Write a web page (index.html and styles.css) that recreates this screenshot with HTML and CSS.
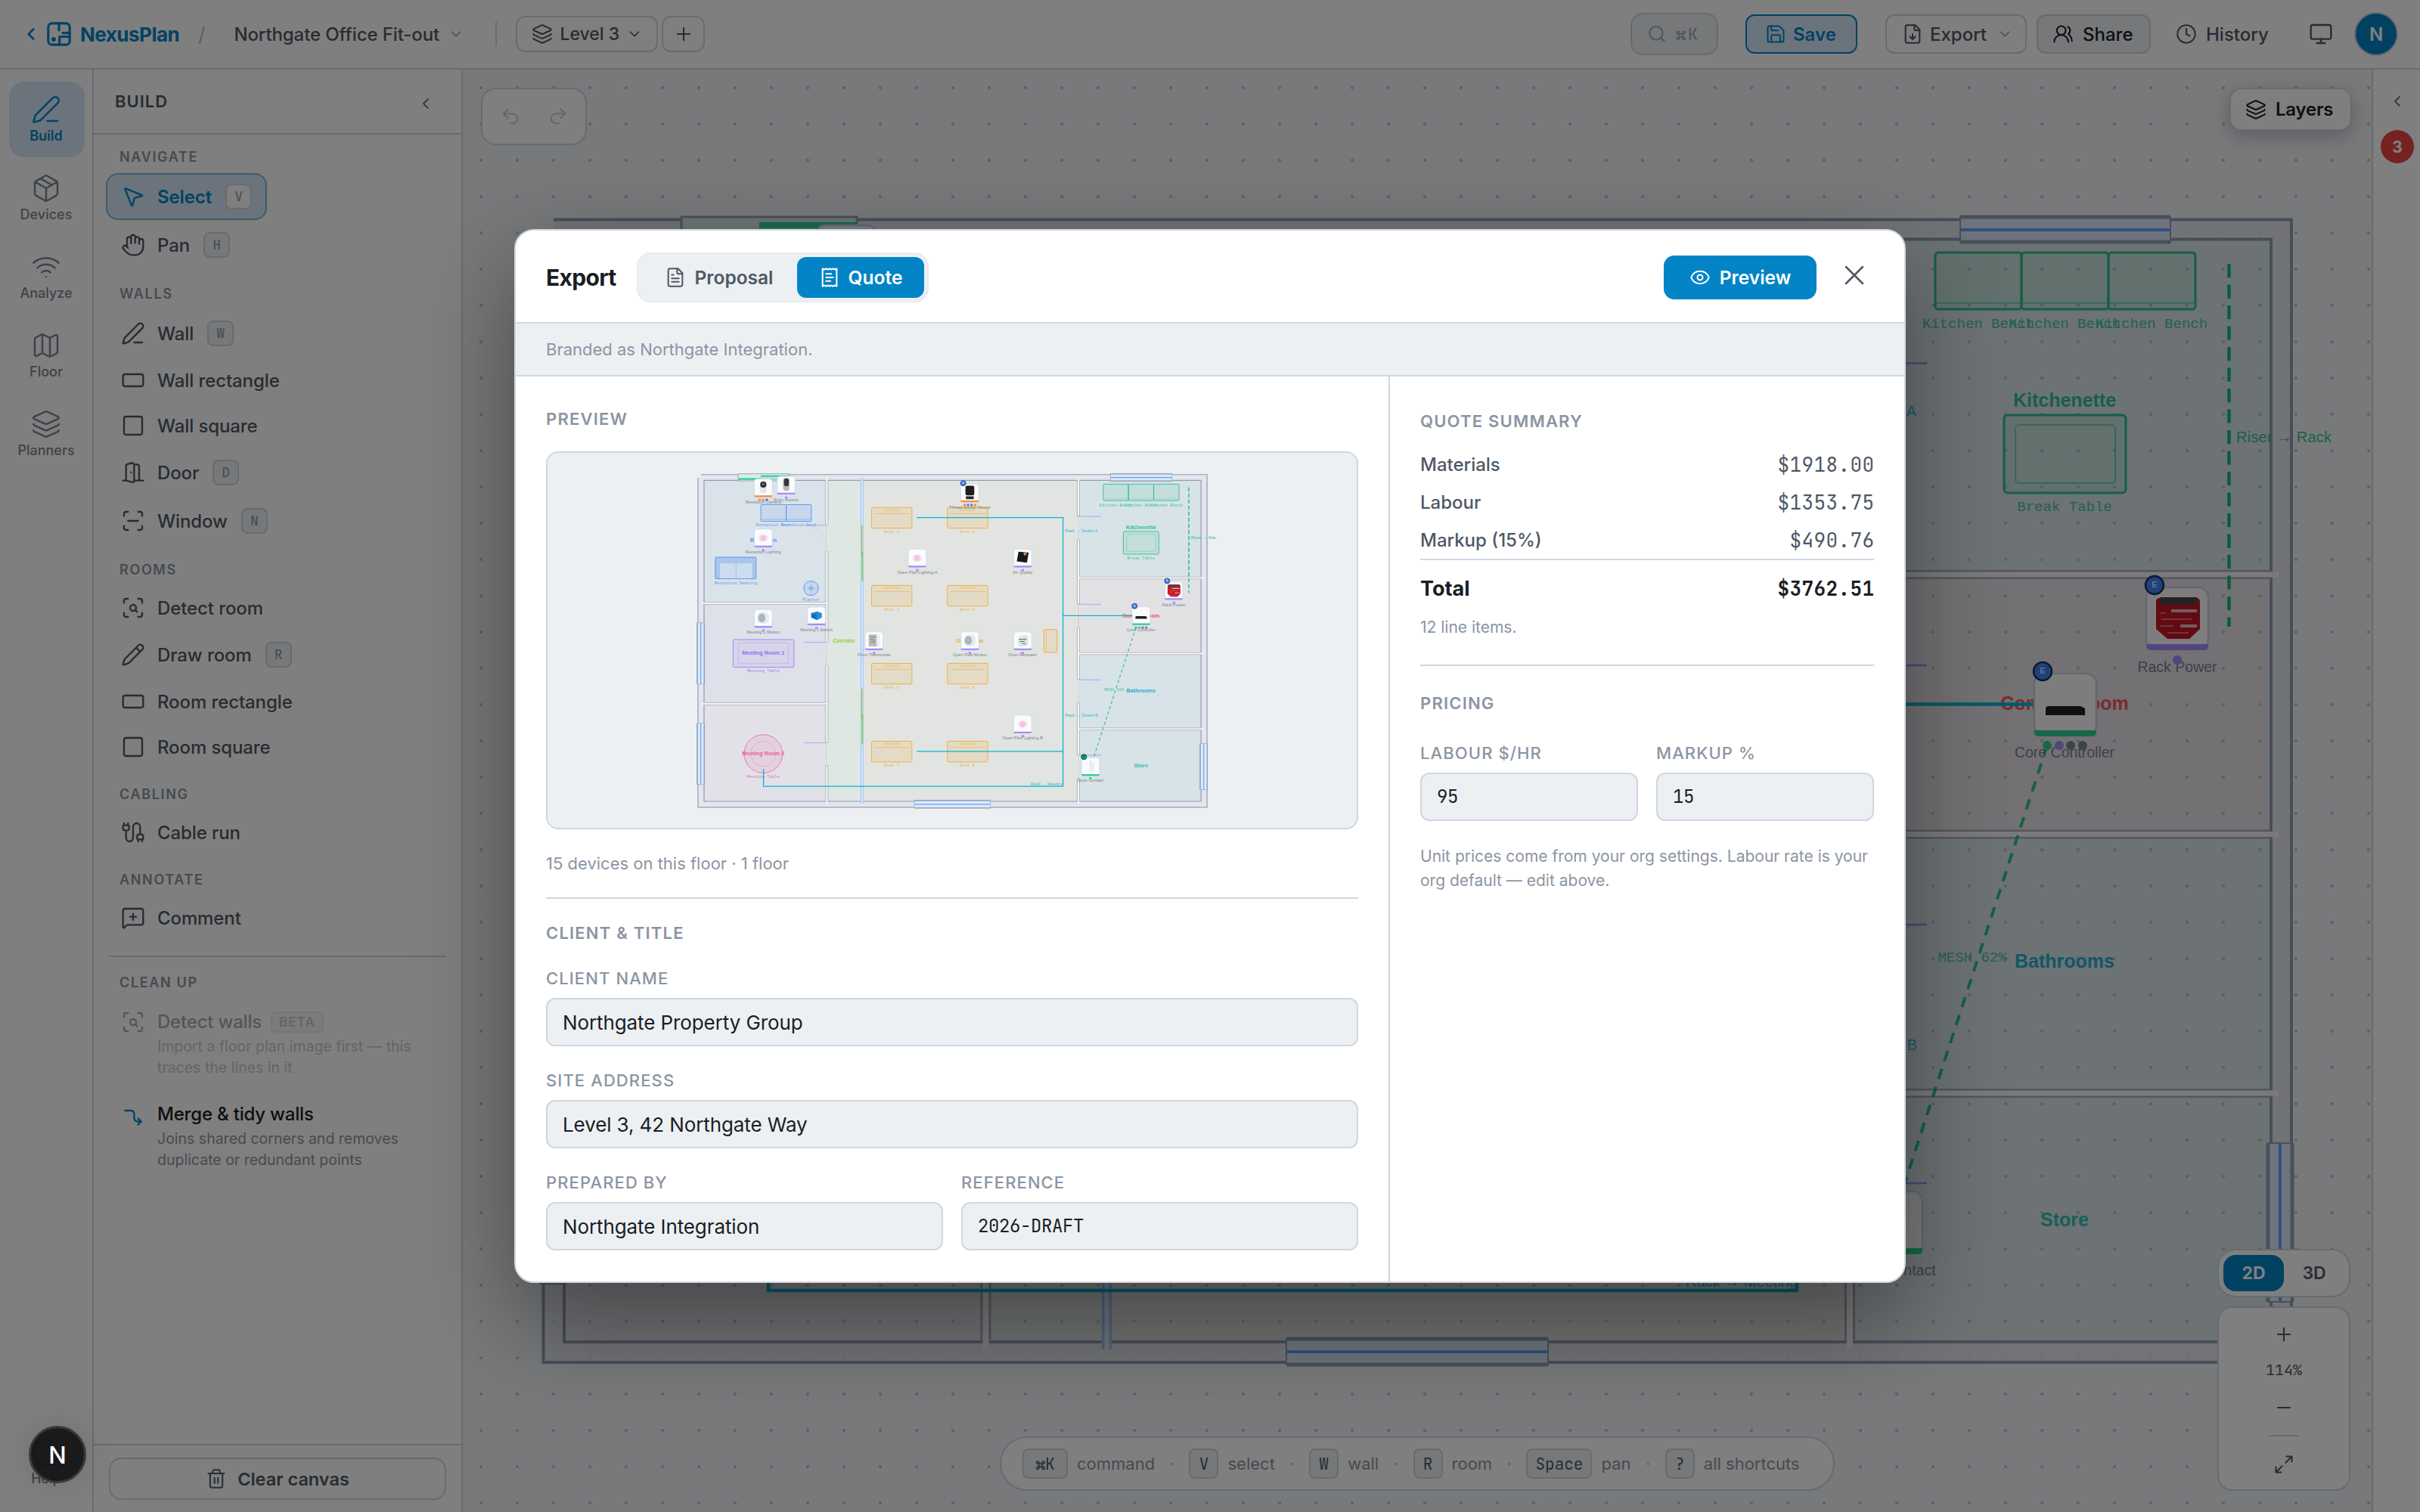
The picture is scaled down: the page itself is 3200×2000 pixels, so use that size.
FILE: index.html
```html
<!DOCTYPE html>
<html lang="en">
<head>
<meta charset="utf-8">
<title>NexusPlan – Northgate Office Fit-out</title>
<link rel="stylesheet" href="styles.css">
</head>
<body>
<svg class="defs" aria-hidden="true">
  <symbol id="i-chev-left" viewBox="0 0 24 24"><path d="m15 18-6-6 6-6"/></symbol>
  <symbol id="i-chev-down" viewBox="0 0 24 24"><path d="m6 9 6 6 6-6"/></symbol>
  <symbol id="i-logo" viewBox="0 0 24 24"><rect x="2" y="2" width="20" height="20" rx="3.5"/><path d="M12 2v6.500M22 11h-6.500M12.500 22v-7.500h9.500"/><circle cx="7" cy="17" r="1"/></symbol>
  <symbol id="i-layers" viewBox="0 0 24 24"><path d="M12.830 2.180a2 2 0 0 0-1.660 0L2.600 6.080a1 1 0 0 0 0 1.830l8.580 3.910a2 2 0 0 0 1.660 0l8.580-3.900a1 1 0 0 0 0-1.830z"/><path d="M2 12a1 1 0 0 0 .58.91l8.600 3.910a2 2 0 0 0 1.650 0l8.580-3.900A1 1 0 0 0 22 12"/><path d="M2 17a1 1 0 0 0 .58.91l8.600 3.910a2 2 0 0 0 1.650 0l8.580-3.900A1 1 0 0 0 22 17"/></symbol>
  <symbol id="i-plus" viewBox="0 0 24 24"><path d="M5 12h14M12 5v14"/></symbol>
  <symbol id="i-minus" viewBox="0 0 24 24"><path d="M5 12h14"/></symbol>
  <symbol id="i-search" viewBox="0 0 24 24"><circle cx="11" cy="11" r="8"/><path d="m21 21-4.340-4.340"/></symbol>
  <symbol id="i-save" viewBox="0 0 24 24"><path d="M15.200 3a2 2 0 0 1 1.400.6l3.800 3.800a2 2 0 0 1 .6 1.400V19a2 2 0 0 1-2 2H5a2 2 0 0 1-2-2V5a2 2 0 0 1 2-2z"/><path d="M17 21v-7a1 1 0 0 0-1-1H8a1 1 0 0 0-1 1v7M7 3v4a1 1 0 0 0 1 1h7"/></symbol>
  <symbol id="i-file-down" viewBox="0 0 24 24"><path d="M15 2H6a2 2 0 0 0-2 2v16a2 2 0 0 0 2 2h12a2 2 0 0 0 2-2V7Z"/><path d="M14 2v4a2 2 0 0 0 2 2h4M12 18v-6M9 15l3 3 3-3"/></symbol>
  <symbol id="i-users" viewBox="0 0 24 24"><path d="M18 21a8 8 0 0 0-16 0"/><circle cx="10" cy="8" r="5"/><path d="M22 20c0-3.370-2-6.500-4-8a5 5 0 0 0-.45-8.300"/></symbol>
  <symbol id="i-clock" viewBox="0 0 24 24"><circle cx="12" cy="12" r="10"/><path d="M12 6v6l4 2"/></symbol>
  <symbol id="i-monitor" viewBox="0 0 24 24"><rect x="2" y="3" width="20" height="14" rx="2"/><path d="M8 21h8M12 17v4"/></symbol>
  <symbol id="i-pen" viewBox="0 0 24 24"><path d="M13 21h8M21.174 6.812a1 1 0 0 0-3.986-3.987L3.842 16.174a2 2 0 0 0-.5.83l-1.321 4.352a.5.5 0 0 0 .623.622l4.353-1.320a2 2 0 0 0 .83-.497z"/></symbol>
  <symbol id="i-pencil" viewBox="0 0 24 24"><path d="M21.174 6.812a1 1 0 0 0-3.986-3.987L3.842 16.174a2 2 0 0 0-.5.83l-1.321 4.352a.5.5 0 0 0 .623.622l4.353-1.320a2 2 0 0 0 .83-.497zM15 5l4 4"/></symbol>
  <symbol id="i-package" viewBox="0 0 24 24"><path d="M11 21.730a2 2 0 0 0 2 0l7-4A2 2 0 0 0 21 16V8a2 2 0 0 0-1-1.730l-7-4a2 2 0 0 0-2 0l-7 4A2 2 0 0 0 3 8v8a2 2 0 0 0 1 1.730zM12 22V12M3.300 7l8.700 5 8.700-5M7.500 4.270l9 5.150"/></symbol>
  <symbol id="i-wifi" viewBox="0 0 24 24"><path d="M12 20h.01M2 8.820a15 15 0 0 1 20 0M5 12.859a10 10 0 0 1 14 0M8.500 16.429a5 5 0 0 1 7 0"/></symbol>
  <symbol id="i-map" viewBox="0 0 24 24"><path d="M14.106 5.553a2 2 0 0 0 1.788 0l3.659-1.830A1 1 0 0 1 21 4.619v12.764a1 1 0 0 1-.553.894l-4.553 2.277a2 2 0 0 1-1.788 0l-4.212-2.106a2 2 0 0 0-1.788 0l-3.659 1.830A1 1 0 0 1 3 19.381V6.618a1 1 0 0 1 .553-.894l4.553-2.277a2 2 0 0 1 1.788 0zM15 5.764v15M9 3.236v15"/></symbol>
  <symbol id="i-pointer" viewBox="0 0 24 24"><path d="M4.037 4.688a.495.495 0 0 1 .651-.651l16 6.500a.5.5 0 0 1-.063.947l-6.124 1.580a2 2 0 0 0-1.438 1.435l-1.579 6.126a.5.5 0 0 1-.947.063z"/></symbol>
  <symbol id="i-hand" viewBox="0 0 24 24"><path d="M18 11V6a2 2 0 0 0-4 0M14 10V4a2 2 0 0 0-4 0v2M10 10.500V6a2 2 0 0 0-4 0v8"/><path d="M18 8a2 2 0 1 1 4 0v6a8 8 0 0 1-8 8h-2c-2.800 0-4.500-.86-5.990-2.340l-3.600-3.600a2 2 0 0 1 2.830-2.820L7 15"/></symbol>
  <symbol id="i-rect" viewBox="0 0 24 24"><rect x="2" y="6" width="20" height="12" rx="2"/></symbol>
  <symbol id="i-square" viewBox="0 0 24 24"><rect x="3" y="3" width="18" height="18" rx="2"/></symbol>
  <symbol id="i-door" viewBox="0 0 24 24"><path d="M13 4h3a2 2 0 0 1 2 2v14M2 20h3M13 20h9M10 12v.01M13 4.562v16.157a1 1 0 0 1-1.242.97L5 20V5.562a2 2 0 0 1 1.515-1.940l4-1A2 2 0 0 1 13 4.561Z"/></symbol>
  <symbol id="i-scan-line" viewBox="0 0 24 24"><path d="M3 7V5a2 2 0 0 1 2-2h2M17 3h2a2 2 0 0 1 2 2v2M21 17v2a2 2 0 0 1-2 2h-2M7 21H5a2 2 0 0 1-2-2v-2M7 12h10"/></symbol>
  <symbol id="i-scan-search" viewBox="0 0 24 24"><path d="M3 7V5a2 2 0 0 1 2-2h2M17 3h2a2 2 0 0 1 2 2v2M21 17v2a2 2 0 0 1-2 2h-2M7 21H5a2 2 0 0 1-2-2v-2M16 16l-1.900-1.900"/><circle cx="12" cy="12" r="3"/></symbol>
  <symbol id="i-cable" viewBox="0 0 24 24"><path d="M17 19a1 1 0 0 1-1-1v-2a2 2 0 0 1 2-2h2a2 2 0 0 1 2 2v2a1 1 0 0 1-1 1zM17 21v-2M19 14V6.500a1 1 0 0 0-7 0v11a1 1 0 0 1-7 0V10M21 21v-2M3 5V3M4 10a2 2 0 0 1-2-2V6a1 1 0 0 1 1-1h4a1 1 0 0 1 1 1v2a2 2 0 0 1-2 2zM7 5V3"/></symbol>
  <symbol id="i-comment" viewBox="0 0 24 24"><path d="M22 17a2 2 0 0 1-2 2H6.828a2 2 0 0 0-1.414.586l-2.202 2.202A.71.71 0 0 1 2 21.286V5a2 2 0 0 1 2-2h16a2 2 0 0 1 2 2zM12 8v6M9 11h6"/></symbol>
  <symbol id="i-merge" viewBox="0 0 24 24"><path d="M4 6h6a3 3 0 0 1 3 3v4a4 4 0 0 0 4 4h3M17 14l3 3-3 3"/></symbol>
  <symbol id="i-trash" viewBox="0 0 24 24"><path d="M10 11v6M14 11v6M19 6v14a2 2 0 0 1-2 2H7a2 2 0 0 1-2-2V6M3 6h18M8 6V4a2 2 0 0 1 2-2h4a2 2 0 0 1 2 2v2"/></symbol>
  <symbol id="i-help" viewBox="0 0 24 24"><circle cx="12" cy="12" r="10"/><path d="M9.090 9a3 3 0 0 1 5.830 1c0 2-3 3-3 3M12 17h.01"/></symbol>
  <symbol id="i-undo" viewBox="0 0 24 24"><path d="M9 14 4 9l5-5M4 9h10.500a5.500 5.500 0 0 1 0 11H11"/></symbol>
  <symbol id="i-redo" viewBox="0 0 24 24"><path d="m15 14 5-5-5-5M20 9H9.500a5.500 5.500 0 0 0 0 11H13"/></symbol>
  <symbol id="i-expand" viewBox="0 0 24 24"><path d="M15 3h6v6M21 3l-7 7M3 21l7-7M9 21H3v-6"/></symbol>
  <symbol id="i-file-text" viewBox="0 0 24 24"><path d="M15 2H6a2 2 0 0 0-2 2v16a2 2 0 0 0 2 2h12a2 2 0 0 0 2-2V7Z"/><path d="M14 2v4a2 2 0 0 0 2 2h4M10 9H8M16 13H8M16 17H8"/></symbol>
  <symbol id="i-receipt" viewBox="0 0 24 24"><path d="M4 2v20l2-1 2 1 2-1 2 1 2-1 2 1 2-1 2 1V2l-2 1-2-1-2 1-2-1-2 1-2-1-2 1ZM14 8H8M16 12H8M13 16H8"/></symbol>
  <symbol id="i-eye" viewBox="0 0 24 24"><path d="M2.062 12.348a1 1 0 0 1 0-.696 10.750 10.750 0 0 1 19.876 0 1 1 0 0 1 0 .696 10.750 10.750 0 0 1-19.876 0"/><circle cx="12" cy="12" r="3"/></symbol>
  <symbol id="i-x" viewBox="0 0 24 24"><path d="M18 6 6 18M6 6l12 12"/></symbol>
</svg>

<div class="app">
  <header class="topbar">
    <svg class="icon back"><use href="#i-chev-left"/></svg>
    <svg class="icon logo"><use href="#i-logo"/></svg>
    <span class="brand">NexusPlan</span>
    <span class="slash">/</span>
    <span class="project">Northgate Office Fit-out</span>
    <svg class="icon chev faint"><use href="#i-chev-down"/></svg>
    <span class="vsep"></span>
    <button class="btn level"><svg class="icon"><use href="#i-layers"/></svg>Level 3<svg class="icon chev"><use href="#i-chev-down"/></svg></button>
    <button class="btn add"><svg class="icon"><use href="#i-plus"/></svg></button>
    <span class="spacer"></span>
    <button class="btn search"><svg class="icon"><use href="#i-search"/></svg><span class="mono">⌘K</span></button>
    <button class="btn save"><svg class="icon"><use href="#i-save"/></svg>Save</button>
    <button class="btn export"><svg class="icon"><use href="#i-file-down"/></svg>Export<svg class="icon chev faint"><use href="#i-chev-down"/></svg></button>
    <button class="btn share"><svg class="icon"><use href="#i-users"/></svg>Share</button>
    <button class="btn history"><svg class="icon"><use href="#i-clock"/></svg>History</button>
    <svg class="icon monitor"><use href="#i-monitor"/></svg>
    <span class="avatar">N</span>
  </header>

  <nav class="rail">
    <a class="rail-item active"><svg class="icon"><use href="#i-pen"/></svg>Build</a>
    <a class="rail-item"><svg class="icon"><use href="#i-package"/></svg>Devices</a>
    <a class="rail-item"><svg class="icon"><use href="#i-wifi"/></svg>Analyze</a>
    <a class="rail-item"><svg class="icon"><use href="#i-map"/></svg>Floor</a>
    <a class="rail-item"><svg class="icon"><use href="#i-layers"/></svg>Planners</a>
    <a class="rail-item help"><svg class="icon"><use href="#i-help"/></svg>Help</a>
  </nav>

  <aside class="panel">
    <div class="panel-head">BUILD<svg class="icon"><use href="#i-chev-left"/></svg></div>
    <div class="tools">
      <h3>NAVIGATE</h3>
      <div class="tool tall selected"><svg class="icon"><use href="#i-pointer"/></svg>Select<kbd>V</kbd></div>
      <div class="tool tall"><svg class="icon"><use href="#i-hand"/></svg>Pan<kbd>H</kbd></div>
      <h3>WALLS</h3>
      <div class="tool tall"><svg class="icon"><use href="#i-pen"/></svg>Wall<kbd>W</kbd></div>
      <div class="tool"><svg class="icon"><use href="#i-rect"/></svg>Wall rectangle</div>
      <div class="tool"><svg class="icon"><use href="#i-square"/></svg>Wall square</div>
      <div class="tool tall"><svg class="icon"><use href="#i-door"/></svg>Door<kbd>D</kbd></div>
      <div class="tool tall"><svg class="icon"><use href="#i-scan-line"/></svg>Window<kbd>N</kbd></div>
      <h3>ROOMS</h3>
      <div class="tool"><svg class="icon"><use href="#i-scan-search"/></svg>Detect room</div>
      <div class="tool tall"><svg class="icon"><use href="#i-pencil"/></svg>Draw room<kbd>R</kbd></div>
      <div class="tool"><svg class="icon"><use href="#i-rect"/></svg>Room rectangle</div>
      <div class="tool"><svg class="icon"><use href="#i-square"/></svg>Room square</div>
      <h3>CABLING</h3>
      <div class="tool"><svg class="icon"><use href="#i-cable"/></svg>Cable run</div>
      <h3>ANNOTATE</h3>
      <div class="tool"><svg class="icon"><use href="#i-comment"/></svg>Comment</div>
      <hr>
      <h3>CLEAN UP</h3>
      <div class="action disabled"><svg class="icon"><use href="#i-scan-search"/></svg>
        <div><div class="action-title">Detect walls<span class="beta">BETA</span></div><p>Import a floor plan image first — this<br>traces the lines in it</p></div></div>
      <div class="action"><svg class="icon merge"><use href="#i-merge"/></svg>
        <div><div class="action-title">Merge &amp; tidy walls</div><p>Joins shared corners and removes<br>duplicate or redundant points</p></div></div>
    </div>
    <div class="panel-foot"><button class="clear"><svg class="icon"><use href="#i-trash"/></svg>Clear canvas</button></div>
  </aside>

  <main class="canvas">
    <svg class="plan-svg" viewBox="612 92 2524 1908">
      <defs>
        <g id="desk"><rect width="183" height="94" rx="5" class="f-orange"/><rect x="55" y="6" width="73" height="11" rx="4" fill="#f59e0b" opacity=".2"/><path d="M14 28h158" stroke="#f59e0b" stroke-width="2.500" opacity=".6"/></g>
        <g id="card"><rect width="82" height="82" rx="13" fill="#fafbfc" stroke="#c6d2e2" stroke-width="2.500"/></g>
        <g id="bar"><path d="M0 75h82v3a5 5 0 0 1-5 5h-72a5 5 0 0 1-5-5z"/></g>
        <g id="badge"><circle cx="11" cy="-3" r="12" fill="#3b82f6" stroke="#1e2f57" stroke-width="2.500"/><text x="11" y="0" class="badge-t">E</text></g>
        <g id="leaf-l"><path d="M0 0h-102" stroke="#a78bfa" stroke-width="2.500"/><path d="M-102 0a102 102 0 0 1 102 104" stroke="#a78bfa" stroke-width="1.500" stroke-dasharray="5 6" opacity=".55" fill="none"/></g>
        <g id="leaf-r"><path d="M0 0h102" stroke="#a78bfa" stroke-width="2.500"/><path d="M102 0a102 102 0 0 0-102 104" stroke="#a78bfa" stroke-width="1.500" stroke-dasharray="5 6" opacity=".55" fill="none"/></g>
        <g id="bulb"><use href="#card"/><ellipse cx="41" cy="42" rx="22" ry="17" fill="#eceaee"/><circle cx="41" cy="41" r="13" fill="#fbbfe3"/></g>
        <g id="motion"><use href="#card"/><rect x="17" y="12" width="50" height="54" rx="20" fill="#e9ebed"/><ellipse cx="34" cy="39" rx="17" ry="20" fill="#a9b9c4"/></g>
      </defs>
      <g id="plan">
        <path fill="rgba(226,227,233,.75)" fill-rule="evenodd" d="M718 306V1802H3030V290H732V306zM746 316H3003V1775H746z"/>
        <g>
          <rect x="746" y="316" width="553" height="555" fill="rgba(146,180,200,.21)"/>
          <rect x="746" y="879" width="553" height="449" fill="rgba(172,172,205,.21)"/>
          <rect x="746" y="1336" width="553" height="439" fill="rgba(190,172,195,.21)"/>
          <rect x="1309" y="316" width="150" height="1459" fill="rgba(168,196,164,.21)"/>
          <rect x="1468" y="316" width="973" height="1459" fill="rgba(190,188,166,.22)"/>
          <rect x="2451" y="316" width="552" height="440" fill="rgba(148,188,190,.23)"/>
          <rect x="2451" y="765" width="552" height="334" fill="rgba(190,168,176,.2)"/>
          <rect x="2451" y="1108" width="552" height="333" fill="rgba(148,188,199,.23)"/>
          <rect x="2451" y="1451" width="552" height="324" fill="rgba(148,188,192,.23)"/>
        </g>
        <g fill="none" stroke="#8f9cb2" stroke-width="4">
          <path d="M718.500 306V1802H3030V290.500H732M746 316.500H3003V1775H746z"/>
        </g>
        <g fill="none" stroke="#a8adb5" stroke-width="14">
          <path d="M1303.500 318V521M1303.500 637V1052M1303.500 1155V1509M1303.500 1612V1775"/>
          <path d="M2446 318V480M2446 585V880M2446 983V1222M2446 1327V1565M2446 1670V1775"/>
          <path d="M746 875H1299M746 1332H1299M2451 760H3003M2451 1103.500H3003M2451 1446H3003" stroke-width="12"/>
        </g>
        <g fill="none" stroke="#f4f5f8" stroke-width="8">
          <path d="M1303.500 306V519M1303.500 639V1050M1303.500 1157V1507M1303.500 1614V1785"/>
          <path d="M2446 306V478M2446 587V878M2446 985V1220M2446 1329V1563M2446 1672V1785"/>
          <path d="M736 875H1299M736 1332H1299M2449 760H3013M2449 1103.500H3013M2449 1446H3013" stroke-width="7"/>
        </g>
        <path d="M1463.500 306V1785" stroke="#9cc4f8" stroke-width="13"/>
        <path d="M1463.500 306V1787" stroke="#dbe9fb" stroke-width="6"/>
        <path d="M1462 521v140M1462 1263v140" stroke="#b6bf6a" stroke-width="6"/>
        <path d="M1465 640v134M1465 1382v134" stroke="#86d05a" stroke-width="6"/>
        <g stroke="#9fc7a4" stroke-width="2.500"><path d="M1303 521v116M1303 1052v103M1303 1509v103M2446 480v105M2446 1222v105M2446 1565v105"/><path d="M2446 880v103" stroke="#f08a80"/></g>
        <use href="#leaf-l" x="1302" y="521"/><use href="#leaf-l" x="1302" y="1052"/><use href="#leaf-l" x="1302" y="1509"/>
        <use href="#leaf-r" x="2446" y="480.500"/><use href="#leaf-r" x="2446" y="880"/><use href="#leaf-r" x="2446" y="1223"/><use href="#leaf-r" x="2446" y="1565"/>

        <g class="win">
          <rect x="2592" y="287" width="278" height="33"/><path class="jamb" d="M2592 287h278M2592 320h278"/><path class="pane" d="M2592 304h278"/>
          <rect x="1701" y="1771" width="346" height="34"/><path class="jamb" d="M1701 1771h346M1701 1805h346"/><path class="pane" d="M1701 1788h346"/>
          <rect x="715" y="964" width="32" height="278"/><path class="jamb" d="M715 964v278M747 964v278"/><path class="pane" d="M731 964v278"/>
          <rect x="715" y="1421" width="32" height="277"/><path class="jamb" d="M715 1421v277M747 1421v277"/><path class="pane" d="M731 1421v277"/>
          <rect x="2999" y="1512" width="32" height="210"/><path class="jamb" d="M2999 1512v210M3031 1512v210"/><path class="pane" d="M3015 1512v210"/>
        </g>
        <rect x="901" y="287" width="232" height="32" fill="#d6ece8" stroke="#94a0b4" stroke-width="3"/>
        <path d="M902 311h230" stroke="#9cc4e8" stroke-width="8"/>
        <path d="M902 311h102M1004 298h129" stroke="#34d399" stroke-width="8"/>

        <use href="#desk" x="1507" y="440"/><use href="#desk" x="1851" y="440"/>
        <use href="#desk" x="1507" y="794"/><use href="#desk" x="1851" y="794"/>
        <use href="#desk" x="1507" y="1148"/><use href="#desk" x="1851" y="1148"/>
        <use href="#desk" x="1507" y="1502"/><use href="#desk" x="1851" y="1502"/>
        <rect x="2289" y="994" width="60" height="104" rx="4" class="f-orange"/><path d="M2300 994v104" stroke="#f59e0b" stroke-width="2" opacity=".6"/>
        <g class="f-blue"><rect x="1004" y="427" width="115" height="76" rx="4"/><rect x="1119" y="427" width="114" height="76" rx="4"/><path d="M1006 494h225" stroke-width="1.500"/>
          <rect class="seat" x="797" y="666" width="185" height="98" rx="4"/><rect class="cushion" x="818" y="694" width="71" height="68"/><rect class="cushion" x="893" y="694" width="71" height="68"/>
          <circle cx="1232" cy="807" r="33"/><circle class="seat" cx="1232" cy="807" r="11" stroke="none"/><path d="M1200 807h65M1232 775v65" stroke-width="1.500" opacity=".5"/></g>
        <g class="f-purple"><rect x="878" y="1040" width="276" height="126" rx="6"/><rect x="901" y="1055" width="228" height="94" rx="5" stroke-width="2" stroke-opacity=".55" fill="none"/></g>
        <g class="f-pink"><circle cx="1015" cy="1559" r="87"/><circle cx="1015" cy="1559" r="57" stroke-width="2" stroke-opacity=".55" fill="none"/></g>
        <g class="f-green"><rect x="2559" y="334" width="114" height="75" rx="4"/><rect x="2673" y="334" width="115" height="75" rx="4"/><rect x="2788" y="334" width="115" height="75" rx="4"/><path d="M2561 401h340" stroke-width="1.500" stroke-opacity=".6"/>
          <rect x="2650" y="549" width="161" height="103" rx="5"/><rect x="2665" y="562" width="132" height="77" rx="5" stroke-width="2" stroke-opacity=".55" fill="none"/></g>

        <g class="room-t">
          <text x="1015" y="596" fill="#3b82f6">Reception</text><text x="1015" y="1109" fill="#8b5cf6">Meeting Room 1</text><text x="1015" y="1566" fill="#ec4899">Meeting Room 2</text>
          <text x="1381" y="1053" fill="#84cc16">Corridor</text><text x="1953" y="1053" fill="#f59e0b">Open Plan</text><text x="2730" y="538" fill="#10b981">Kitchenette</text>
          <text x="2730" y="939" fill="#ef4444">Comms Room</text><text x="2730" y="1280" fill="#06a6c8">Bathrooms</text><text x="2730" y="1622" fill="#14b8a6">Store</text>
        </g>
        <g class="furn-t">
          <g fill="#f59e0b"><text x="1598" y="556">Desk 1</text><text x="1942" y="556">Desk 2</text><text x="1598" y="910">Desk 3</text><text x="1942" y="910">Desk 4</text><text x="1598" y="1264">Desk 5</text><text x="1942" y="1264">Desk 6</text><text x="1598" y="1618">Desk 7</text><text x="1942" y="1618">Desk 8</text></g>
          <g fill="#3b82f6"><text x="1061" y="525">Reception Desk</text><text x="1176" y="525">Reception Desk</text><text x="890" y="788">Reception Seating</text><text x="1232" y="865">Planter</text></g>
          <text x="1015" y="1189" fill="#8b5cf6">Meeting Table</text><text x="1015" y="1669" fill="#ec4899">Meeting Table</text>
          <g fill="#10b981"><text x="2616" y="434">Kitchen Bench</text><text x="2730" y="434">Kitchen Bench</text><text x="2845" y="434">Kitchen Bench</text><text x="2730" y="676">Break Table</text></g>
        </g>

        <g fill="none" stroke="#06b6d4" stroke-width="4.500"><path d="M1712 486H2376V1707H1016V1628M2376 931.500H2700M1712 1548H2376"/></g>
        <path d="M2947.500 349V829" stroke="#10b981" stroke-width="4.500" stroke-dasharray="18.300 9.200"/>
        <path d="M2707 986 2516 1573" stroke="#10b981" stroke-width="4" stroke-dasharray="14 11" opacity=".85"/>
        <g class="cable-t"><text x="2384" y="551">Rack → Desks A</text><text x="2384" y="1389">Rack → Desks B</text><text x="2229" y="1702">Rack → Meeting</text><text x="2957" y="585" fill="#10b981" textLength="126">Riser → Rack</text></g>
        <text x="2608" y="1272" class="mesh-t">MESH 62%</text>

        <g class="dev-t">
          <text x="1015" y="422">Reception Camera</text><text x="1119" y="410">Entry Access</text><text x="1953" y="445">Thread Border Router</text><text x="1015" y="650">Reception Lighting</text>
          <text x="1714" y="741">Open Plan Lighting A</text><text x="2193" y="741">Air Quality</text><text x="1015" y="1014">Meeting 1 Motion</text><text x="1256" y="1003">Meeting 1 Switch</text>
          <text x="1518" y="1117">Floor Thermostat</text><text x="1953" y="1117">Open Plan Motion</text><text x="2193" y="1117">Floor Repeater</text><text x="2193" y="1494">Open Plan Lighting B</text>
          <text x="2879" y="889">Rack Power</text><text x="2730" y="1002">Core Controller</text><text x="2500" y="1687">Store Contact</text>
        </g>
        <g class="dots">
          <g fill="#a78bfa"><circle cx="1119" cy="395" r="6"/><circle cx="1015" cy="634" r="6"/><circle cx="1714" cy="725" r="6"/><circle cx="2193" cy="725" r="6"/><circle cx="1015" cy="999" r="6"/><circle cx="1256" cy="988" r="6"/><circle cx="1518" cy="1101" r="6"/><circle cx="1953" cy="1101" r="6"/><circle cx="2193" cy="1101" r="6"/><circle cx="2193" cy="1479" r="6"/><circle cx="2879" cy="873" r="6"/><circle cx="2723" cy="986" r="6"/></g>
          <g fill="#fb8c3c"><circle cx="999" cy="406" r="6"/><circle cx="1015" cy="406" r="6"/><circle cx="1929" cy="429" r="6"/><circle cx="1977" cy="429" r="6"/></g>
          <g fill="#3b82f6"><circle cx="1031" cy="406" r="6"/><circle cx="1945" cy="429" r="6"/><circle cx="1961" cy="429" r="6"/></g>
          <g fill="#2fcf8f"><circle cx="2707" cy="986" r="6"/><circle cx="2500" cy="1671" r="6"/></g>
          <g fill="#7b8594"><circle cx="2738" cy="986" r="6"/><circle cx="2754" cy="986" r="6"/></g>
        </g>

        <g transform="translate(974 310)"><use href="#card"/><rect x="26" y="8" width="30" height="58" rx="14" fill="#e3e5e8"/><circle cx="41" cy="26" r="14" fill="#2a2d33"/><circle cx="41" cy="24" r="5" fill="#7a818c"/><use href="#bar" fill="#fb8c3c"/></g>
        <g transform="translate(1078 298)"><use href="#card"/><rect x="27" y="8" width="29" height="58" rx="12" fill="#b9b6b6"/><rect x="31" y="11" width="22" height="34" rx="8" fill="#34363b"/><use href="#bar" fill="#a78bfa"/></g>
        <g transform="translate(1912 333)"><use href="#card"/><rect x="21" y="8" width="40" height="44" rx="8" fill="#1d1d20"/><rect x="23" y="56" width="36" height="13" rx="3" fill="#26272a"/><use href="#bar" fill="#fb8c3c"/><use href="#badge"/></g>
        <g transform="translate(974 538)"><use href="#bulb"/><use href="#bar" fill="#a78bfa"/></g>
        <g transform="translate(1673 629)"><use href="#bulb"/><use href="#bar" fill="#a78bfa"/></g>
        <g transform="translate(2152 1383)"><use href="#bulb"/><use href="#bar" fill="#a78bfa"/></g>
        <g transform="translate(2152 629)"><use href="#card"/><path d="M22 12 68 16 60 62 14 56z" fill="#17181b"/><circle cx="52" cy="22" r="7" fill="#d98b3c"/><use href="#bar" fill="#a78bfa"/></g>
        <g transform="translate(974 903)"><use href="#motion"/><use href="#bar" fill="#a78bfa"/></g>
        <g transform="translate(1912 1005)"><use href="#motion"/><use href="#bar" fill="#a78bfa"/></g>
        <g transform="translate(1215 892)"><use href="#card"/><path d="M18 28 44 20 66 28V48L44 60 18 48z" fill="#1c8fd6"/><path d="M18 28 42 36V58L18 48z" fill="#1272b4"/><use href="#bar" fill="#a78bfa"/></g>
        <g transform="translate(1477 1005)"><use href="#card"/><rect x="14" y="12" width="54" height="54" rx="4" fill="#eeeff0"/><rect x="17" y="12" width="36" height="54" rx="3" fill="#b9bcba"/><path d="M24 24h22M24 34h12M40 34v18M26 46h8" stroke="#7d827f" stroke-width="4"/><use href="#bar" fill="#a78bfa"/></g>
        <g transform="translate(2152 1005)"><use href="#card"/><path d="M20 30 32 16H58L66 28V58L54 66H24L20 58z" fill="#dfe6e1"/><path d="M24 34h34M28 44h22M38 54h18" stroke="#4e8f6c" stroke-width="4"/><use href="#bar" fill="#a78bfa"/></g>
        <g transform="translate(2838 777)"><use href="#card"/><path d="M17 14h50a5 5 0 0 1 4 5v36L57 68H28L13 55V19a5 5 0 0 1 4-5z" fill="#c71526"/><path d="M18 18h49" stroke="#4b4146" stroke-width="10"/><path d="M33 31h34M45 51h22" stroke="#e9b9bd" stroke-width="4"/><path d="M18 34h8M20 42h40M18 51h18M28 60h28" stroke="#dc6a74" stroke-width="2"/><use href="#bar" fill="#a78bfa"/><use href="#badge"/></g>
        <g transform="translate(2690 891)"><use href="#card"/><path d="M15 46q0-3 4-3h42l6 3v9H15z" fill="#1e1f22"/><use href="#bar" fill="#2fcf8f"/><use href="#badge"/></g>
        <g transform="translate(2460 1576)"><use href="#card"/><rect x="36" y="12" width="13" height="54" rx="4" fill="#e9ebee"/><rect x="51" y="22" width="5" height="38" rx="2" fill="#e2e4e8"/><use href="#bar" fill="#2fcf8f"/><circle cx="11" cy="-3" r="12" fill="#10a371" stroke="#14352c" stroke-width="3"/><path d="M11-9v7" stroke="#14352c" stroke-width="3"/></g>
      </g>
    </svg>
    <div class="undo"><svg class="icon"><use href="#i-undo"/></svg><svg class="icon"><use href="#i-redo"/></svg></div>
    <button class="layers-btn"><svg class="icon"><use href="#i-layers"/></svg>Layers</button>
    <div class="view-stack">
      <div class="view-toggle"><span class="on">2D</span><span>3D</span></div>
      <div class="zoom-box"><svg class="icon"><use href="#i-plus"/></svg><span class="mono">114%</span><svg class="icon"><use href="#i-minus"/></svg><i></i><svg class="icon expand"><use href="#i-expand"/></svg></div>
    </div>
    <div class="hints">
      <kbd class="wide">⌘K</kbd><span>command</span><b>·</b><kbd>V</kbd><span>select</span><b>·</b><kbd>W</kbd><span>wall</span><b>·</b><kbd>R</kbd><span>room</span><b>·</b><kbd>Space</kbd><span>pan</span><b>·</b><kbd>?</kbd><span>all shortcuts</span>
    </div>
  </main>

  <aside class="side"><svg class="icon"><use href="#i-chev-left"/></svg><span class="count">3</span></aside>
</div>

<div class="overlay">
  <section class="modal">
    <header class="modal-head">
      <h1>Export</h1>
      <div class="tabs"><span class="tab"><svg class="icon"><use href="#i-file-text"/></svg>Proposal</span><span class="tab on"><svg class="icon"><use href="#i-receipt"/></svg>Quote</span></div>
      <span class="spacer"></span>
      <button class="primary"><svg class="icon"><use href="#i-eye"/></svg>Preview</button>
      <svg class="icon close"><use href="#i-x"/></svg>
    </header>
    <div class="notice">Branded as Northgate Integration.</div>
    <div class="modal-body">
      <div class="col-main">
        <h2>PREVIEW</h2>
        <div class="preview"><svg viewBox="674 192 2397 1703"><use href="#plan"/></svg></div>
        <p class="meta">15 devices on this floor · 1 floor</p>
        <hr>
        <h2 class="client">CLIENT &amp; TITLE</h2>
        <label>CLIENT NAME</label><div class="input">Northgate Property Group</div>
        <label>SITE ADDRESS</label><div class="input">Level 3, 42 Northgate Way</div>
        <div class="pair">
          <div><label>PREPARED BY</label><div class="input">Northgate Integration</div></div>
          <div><label>REFERENCE</label><div class="input mono">2026-DRAFT</div></div>
        </div>
      </div>
      <div class="col-side">
        <h2>QUOTE SUMMARY</h2>
        <div class="line"><span>Materials</span><span class="mono">$1918.00</span></div>
        <div class="line"><span>Labour</span><span class="mono">$1353.75</span></div>
        <div class="line"><span>Markup (15%)</span><span class="mono">$490.76</span></div>
        <div class="line total"><span>Total</span><span class="mono">$3762.51</span></div>
        <p class="meta small">12 line items.</p>
        <hr>
        <h2 class="pricing">PRICING</h2>
        <div class="pair">
          <div><label>LABOUR $/HR</label><div class="input mono">95</div></div>
          <div><label>MARKUP %</label><div class="input mono">15</div></div>
        </div>
        <p class="note">Unit prices come from your org settings. Labour rate is your<br>org default — edit above.</p>
      </div>
    </div>
  </section>
</div>
<div class="dev-badge">N</div>
</body>
</html>
```
FILE: styles.css
```css
:root {
  --accent: #0284c7;
  --accent-soft: #d6e9f8;
  --ink: #1a1d23;
  --ink-2: #4f5865;
  --muted: #8b95a3;
  --line: #cfd7e1;
  --soft: #ecf0f3;
  --mono: "JetBrains Mono", "Liberation Mono", monospace;
}
* { box-sizing: border-box; margin: 0; }
body { width: 3200px; height: 2000px; overflow: hidden; position: relative; font-family: Inter, "Liberation Sans", sans-serif; font-optical-sizing: none; color: var(--ink-2); background: #fff; }
.defs { position: absolute; width: 0; height: 0; }
.icon { width: 28px; height: 28px; flex: none; fill: none; stroke: currentColor; stroke-width: 1.75; stroke-linecap: round; stroke-linejoin: round; }
.mono { font-family: var(--mono); }
.spacer { flex: 1; }
button { font: inherit; color: inherit; background: none; border: 0; padding: 0; display: flex; align-items: center; }
hr { border: 0; border-top: 2px solid var(--line); }

.app { display: grid; grid-template: 92px 1908px / 124px 488px 1fr 64px; height: 2000px; }

/* top bar */
.topbar { grid-column: 1 / -1; display: flex; align-items: center; border-bottom: 2px solid var(--line); padding: 0 28px; font-size: 26px; font-weight: 500; }
.back { width: 26px; height: 26px; color: var(--accent); stroke-width: 2.5; }
.logo { width: 34px; height: 34px; margin-left: 7px; color: var(--accent); stroke-width: 2.2; }
.brand { margin-left: 11px; color: var(--accent); font-weight: 700; letter-spacing: -.5px; width: 137px; }
.slash { margin-left: 19px; color: #b6bfca; font-weight: 400; }
.project { margin-left: 38px; width: 275px; white-space: nowrap; letter-spacing: -.1px; font-size: 24px; }
.chev { width: 22px; height: 22px; margin-left: 8px; }
.faint { color: var(--muted); }
.vsep { width: 2px; height: 32px; background: var(--line); margin: 0 25px 0 41px; }
.btn { height: 52px; border: 2px solid var(--line); border-radius: 12px; font-size: 24px; gap: 9px; white-space: nowrap; }
.level { width: 188px; height: 48px; padding-left: 19px; font-size: 23px; }
.level .chev { margin-left: 0; }
.add { width: 57px; height: 48px; margin-left: 5px; justify-content: center; }
.search { width: 116px; height: 56px; border-radius: 16px; background: var(--soft); color: #a0a9b5; padding-left: 20px; gap: 12px; }
.search .icon { width: 26px; height: 26px; }
.search .mono { font-size: 22px; letter-spacing: 2.500px; font-weight: 400; }
.save { width: 148px; margin-left: 36px; border-color: var(--accent); background: var(--accent-soft); color: var(--accent); padding-left: 24px; font-weight: 600; }
.export { width: 187px; margin-left: 37px; padding-left: 20px; }
.export .chev { margin-left: 4px; }
.share { width: 151px; margin-left: 13px; background: var(--soft); color: var(--ink); padding-left: 19px; gap: 12px; }
.history { border: 0; margin-left: 33px; width: 125px; gap: 12px; }
.monitor { width: 32px; height: 32px; margin-left: 51px; }
.avatar { width: 58px; height: 58px; margin: 0 1px 0 28px; border-radius: 50%; background: var(--accent); border: 2px solid var(--line); color: #fff; display: grid; place-items: center; font-size: 24px; font-weight: 600; }

/* left rail */
.rail { border-right: 2px solid var(--line); padding: 16px 10px 0 12px; display: flex; flex-direction: column; gap: 4px; }
.rail-item { height: 100px; width: 100px; border-radius: 20px; display: flex; flex-direction: column; align-items: center; justify-content: center; gap: 3px; font-size: 18px; line-height: 24px; font-weight: 500; color: #7c8694; padding: 1px 2px 0 0; }
.rail-item .icon { width: 40px; height: 40px; stroke-width: 1.5; }
.rail-item.active { background: var(--accent-soft); color: var(--accent); font-weight: 600; }
.rail-item.help { margin: auto 0 16px; }

/* tool panel */
.panel { border-right: 2px solid var(--line); display: flex; flex-direction: column; }
.panel-head { height: 86px; border-bottom: 2px solid var(--line); display: flex; align-items: center; justify-content: space-between; padding: 0 35px 0 28px; font-size: 22px; font-weight: 600; letter-spacing: 1px; }
.panel-head .icon { width: 24px; height: 24px; margin-top: 6px; }
.tools { flex: 1; padding: 20px 20px 0 16px; display: flex; flex-direction: column; align-items: flex-start; }
.tools h3 { font-size: 18px; line-height: 20px; font-weight: 600; letter-spacing: 1.650px; color: var(--muted); margin: 24px 0 11px 18px; }
.tools h3:first-child { margin-top: 0; }
.tool { height: 58px; border: 2px solid transparent; border-radius: 16px; padding: 0 18px; display: flex; align-items: center; gap: 16px; font-size: 24px; font-weight: 500; letter-spacing: -.1px; margin-bottom: 2px; white-space: nowrap; }
.tool + h3 { margin-top: 22px; }
.tall { height: 62px; }
.tool .icon, .action .icon { width: 32px; height: 32px; }
.selected { background: var(--accent-soft); border-color: #79b9dd; color: var(--accent); font-weight: 600; }
kbd { font-family: var(--mono); font-size: 20px; line-height: 1; border: 2px solid var(--line); border-radius: 8px; background: var(--soft); color: var(--muted); height: 34px; min-width: 35px; padding: 0 9px; display: grid; place-items: center; font-weight: 400; }
.tool kbd { font-size: 18px; margin-left: 2px; }
.selected kbd { background: #fff; }
.tools hr { width: 446px; margin: 19px 0 0 4px; }
.action { display: flex; gap: 16px; padding: 15px 20px 13px; margin-bottom: 4px; }
.action-title { display: flex; align-items: center; font-size: 24px; line-height: 32px; font-weight: 500; letter-spacing: -.2px; color: var(--ink); margin-bottom: 2px; white-space: nowrap; }
.action p { font-size: 19.500px; line-height: 28px; color: var(--muted); white-space: nowrap; }
.disabled { opacity: .5; }
.disabled .action-title { color: var(--ink-2); }
.beta { font-size: 17px; line-height: 24px; font-weight: 600; letter-spacing: 1px; border: 2px solid var(--line); border-radius: 6px; padding: 0 9px; margin-left: 12px; color: var(--muted); background: var(--soft); }
.merge { color: var(--accent); margin-top: 3px; }
.panel-foot { border-top: 2px solid var(--line); height: 90px; padding: 16px 20px 0; }
.clear { width: 446px; height: 56px; border: 2px solid var(--line); border-radius: 16px; justify-content: center; gap: 14px; font-size: 23.500px; font-weight: 600; }

/* canvas */
.canvas { position: relative; background: #f0f2f5 radial-gradient(circle, #bcc3cc 1.800px, transparent 2.400px) 0 0 / 48px 48px; }
.plan-svg { display: block; width: 2524px; height: 1908px; }
.f-orange { fill: rgba(245,158,11,.12); stroke: #f0a830; stroke-width: 3; }
.f-blue { fill: #3b82f6; fill-opacity: .1; stroke: #4f8ff0; stroke-width: 3; }
.seat { fill-opacity: .3; }
.cushion { fill: #dbe7f5; fill-opacity: .7; stroke: none; }
.f-purple { fill: rgba(139,92,246,.09); stroke: #9b7bf0; stroke-width: 3; }
.f-pink { fill: rgba(236,72,153,.1); stroke: #ea6aab; stroke-width: 3; }
.f-green { fill: rgba(16,185,129,.1); stroke: #2bbd8e; stroke-width: 3; }
.win rect { fill: #dbe9fb; stroke: #94a0b4; stroke-width: 2; }
.win .jamb { stroke: #94a0b4; stroke-width: 5; }
.win .pane { stroke: #60a5fa; stroke-width: 4; }
.room-t { font: 700 25px "Liberation Sans", sans-serif; text-anchor: middle; opacity: .85; }
.furn-t { font: 19px "Liberation Mono", monospace; text-anchor: middle; opacity: .75; }
.cable-t { font: 20px "Liberation Sans", sans-serif; fill: #06b6d4; opacity: .85; }
.dev-t { font: 19.500px "Liberation Sans", sans-serif; text-anchor: middle; fill: #7b838f; }
.mesh-t { font: 19px "Liberation Mono", monospace; text-anchor: middle; fill: #10b981; opacity: .75; }
.badge-t { font: 700 11px "Liberation Sans", sans-serif; text-anchor: middle; fill: #fff; opacity: .8; }
.undo { position: absolute; left: 24px; top: 24px; width: 140px; height: 76px; background: #fff; border: 2px solid var(--line); border-radius: 20px; display: flex; align-items: center; justify-content: space-around; padding: 0 5px 0 6px; color: #c6ccd5; }
.layers-btn { position: absolute; right: 26px; top: 24px; width: 162px; height: 57px; background: #fff; border: 2px solid var(--line); border-radius: 16px; gap: 12px; padding-left: 19px; color: var(--ink); font-size: 24px; font-weight: 600; letter-spacing: -.2px; box-shadow: 0 8px 24px rgba(0,0,0,.22); }
.view-stack { position: absolute; right: 28px; bottom: 28px; width: 176px; display: flex; flex-direction: column; gap: 12px; }
.view-toggle { height: 64px; background: #fff; border: 2px solid var(--line); border-radius: 24px; display: flex; padding: 6px; font-size: 23px; font-weight: 600; }
.view-toggle span { flex: 1; display: grid; place-items: center; border-radius: 16px; }
.view-toggle .on { background: var(--accent); color: #fff; font-weight: 700; }
.zoom-box { height: 244px; background: #fff; border: 2px solid var(--line); border-radius: 20px; display: flex; flex-direction: column; align-items: center; padding-top: 21px; }
.zoom-box .mono { font-size: 20px; line-height: 28px; margin: 19px 0 22px; }
.zoom-box i { width: 40px; height: 2px; background: var(--line); margin: 22px 0 23px; }
.hints { position: absolute; left: 710px; bottom: 28px; width: 1104px; height: 72px; background: #fff; border: 2px solid var(--line); border-radius: 36px; display: flex; align-items: center; padding-left: 28px; font-size: 22px; color: var(--muted); white-space: nowrap; }
.hints span { margin-left: 12px; }
.hints b { font-weight: 400; margin: 0 19.500px; color: #b6bfca; }
.hints kbd { height: 40px; min-width: 39px; color: var(--ink-2); font-size: 21px; padding: 0 10px; }
.hints .wide { min-width: 60px; }
.side { border-left: 2px solid var(--line); display: flex; flex-direction: column; align-items: center; padding: 30px 0 0 2px; gap: 26px; }
.side .icon { width: 24px; height: 24px; }
.count { width: 44px; height: 44px; border-radius: 50%; background: #ef4444; color: #fff; display: grid; place-items: center; font-size: 21px; font-weight: 700; }

/* export dialog */
.overlay { position: absolute; inset: 0; background: rgba(0,0,0,.5); display: flex; align-items: center; justify-content: center; }
.modal { width: 1840px; height: 1394px; background: #fff; border: 2px solid var(--line); border-radius: 26px; box-shadow: 0 48px 128px rgba(0,0,0,.4); overflow: hidden; display: flex; flex-direction: column; }
.modal-head { height: 123px; border-bottom: 2px solid var(--line); display: flex; align-items: center; padding: 2px 44px 0 40px; }
.modal h1 { font-size: 30px; font-weight: 700; letter-spacing: -.7px; color: var(--ink); width: 120px; }
.tabs { display: flex; background: var(--soft); border: 2px solid #e8ecf1; border-radius: 18px; padding: 4px; }
.tab { width: 206px; height: 54px; display: flex; align-items: center; justify-content: center; gap: 11px; font-size: 24.500px; font-weight: 600; border-radius: 12px; }
.tab.on { width: 168px; background: var(--accent); color: #fff; }
.primary { width: 202px; height: 58px; border-radius: 14px; background: var(--accent); color: #fff; font-size: 24.500px; font-weight: 600; justify-content: center; gap: 12px; }
.close { width: 44px; height: 44px; margin: -6px 0 0 28px; stroke-width: 1.400; }
.notice { height: 70px; background: var(--soft); border-bottom: 2px solid var(--line); padding: 0 40px; line-height: 68px; font-size: 22px; color: var(--muted); }
.modal-body { flex: 1; display: grid; grid-template-columns: 1156px 1fr; }
.modal h2 { font-size: 22px; line-height: 28px; font-weight: 600; letter-spacing: 1.200px; color: var(--muted); }
.modal label { display: block; font-size: 22px; line-height: 28px; font-weight: 500; letter-spacing: 1.100px; color: var(--muted); margin-bottom: 12px; }
.col-main { border-right: 2px solid var(--line); padding: 42px 40px 0; }
.preview { margin: 29px 0 30px; height: 500px; background: var(--soft); border: 2px solid var(--line); border-radius: 16px; display: flex; justify-content: center; }
.preview svg { width: 698px; height: 496px; overflow: hidden; }
.meta { font-size: 22px; line-height: 30px; color: var(--muted); }
.small { font-size: 21px; }
.col-main hr { margin: 30px 0 31px; }
.client { margin-bottom: 32px; }
.input { height: 64px; border: 2px solid var(--line); border-radius: 12px; background: var(--soft); padding: 0 20px; line-height: 62px; font-size: 26px; letter-spacing: -.1px; color: var(--ink); margin-bottom: 31px; }
.input.mono { font-size: 24px; letter-spacing: -.4px; line-height: 60px; }
.pair { display: grid; grid-template-columns: 1fr 1fr; gap: 24px; }
.col-side { padding: 45px 40px 0; }
.line { display: flex; justify-content: space-between; align-items: center; height: 50px; font-size: 24px; font-weight: 500; }
.col-side h2 + .line { margin-top: 18px; }
.line .mono { font-size: 26px; font-weight: 400; letter-spacing: .4px; margin-right: -.4px; }
.total { border-top: 2px solid var(--line); height: 76px; color: var(--ink); font-weight: 700; font-size: 27px; }
.total .mono { font-weight: 700; }
.col-side hr { margin: 34px 0 35px; }
.pricing { margin-bottom: 38px; }
.note { font-size: 21px; line-height: 32px; color: var(--muted); white-space: nowrap; }

.dev-badge { position: absolute; left: 38px; top: 1886px; width: 76px; height: 76px; border-radius: 50%; background: rgba(20,20,20,.94); border: 3px solid #3a3a3a; box-shadow: 0 0 40px rgba(0,0,0,.12); color: #fff; display: grid; place-items: center; font-size: 31px; font-weight: 500; }
```
